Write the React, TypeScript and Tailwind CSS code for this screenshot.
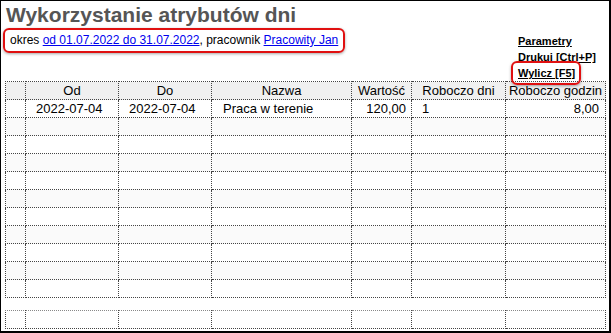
import React from "react";

const cols = [20, 93, 93, 140, 60, 94, 100];

function Cols() {
  return (
    <colgroup>
      {cols.map((w, i) => (
        <col key={i} style={{ width: w }} />
      ))}
    </colgroup>
  );
}

const cell = "border border-dotted border-[#444] h-[18px] p-0 leading-[15px]";

export default function App() {
  const empty = Array.from({ length: 10 }, (_, i) => i);
  return (
    <div className="w-[611px] h-[333px] bg-white border-l border-t border-r-2 border-b-2 border-black overflow-hidden font-['Liberation_Sans',Arial,sans-serif] text-black">
      <div className="pl-[5px] pt-[2px] text-[21px] leading-[23px] font-bold text-[#555]">
        Wykorzystanie atrybutów dni
      </div>
      <div className="flex items-start">
        <div className="flex-1 pt-[1px]">
          <div className="inline-block ml-[2px] border-2 border-[#e01010] rounded-[6px] px-[5px] pt-[3px] pb-[3px] text-[12px] leading-[15px] shadow-[0_1px_3px_rgba(0,0,0,0.35)]">
            okres <a href="#" className="text-[#0000ee] underline">od 01.07.2022 do 31.07.2022</a>, pracownik{" "}
            <a href="#" className="text-[#0000ee] underline">Pracowity Jan</a>
          </div>
        </div>
        <div className="w-[91px] mt-[7px] flex flex-col text-[11px] leading-[16px] font-bold">
          <a href="#" className="underline self-start">Parametry</a>
          <a href="#" className="underline self-start">Drukuj [Ctrl+P]</a>
          <span className="relative self-start">
            <a href="#" className="underline">Wylicz [F5]</a>
            <span className="absolute -left-[7px] -right-[6px] -top-[4px] -bottom-[4px] border-2 border-[#e01010] rounded-[6px] shadow-[0_1px_3px_rgba(0,0,0,0.35)] pointer-events-none" />
          </span>
        </div>
      </div>
      <div className="pl-[4px]">
        <table className="table-fixed border-collapse text-[13px] w-[601px]">
          <Cols />
          <thead>
            <tr className="bg-[#f0f0f0]">
              <th className={cell}></th>
              <th className={`${cell} font-normal text-center`}>Od</th>
              <th className={`${cell} font-normal text-center`}>Do</th>
              <th className={`${cell} font-normal text-center`}>Nazwa</th>
              <th className={`${cell} font-normal text-center`}>Wartość</th>
              <th className={`${cell} font-normal text-center`}>Roboczo dni</th>
              <th className={`${cell} font-normal text-center whitespace-nowrap`}>Roboczo godzin</th>
            </tr>
          </thead>
          <tbody>
            <tr>
              <td className={cell}></td>
              <td className={`${cell} pl-[10px]`}>2022-07-04</td>
              <td className={`${cell} pl-[10px]`}>2022-07-04</td>
              <td className={`${cell} pl-[11px]`}>Praca w terenie</td>
              <td className={`${cell} text-right pr-[5px]`}>120,00</td>
              <td className={`${cell} pl-[10px]`}>1</td>
              <td className={`${cell} text-right pr-[6px]`}>8,00</td>
            </tr>
            {empty.map((i) => (
              <tr key={i} className={i % 2 === 0 ? "bg-[#fafafa]" : "bg-white"}>
                {cols.map((_, j) => (
                  <td key={j} className={cell}></td>
                ))}
              </tr>
            ))}
          </tbody>
        </table>
        <table className="table-fixed border-collapse text-[13px] w-[601px] mt-[12px]">
          <Cols />
          <tbody>
            <tr>
              {cols.map((_, j) => (
                <td key={j} className={`${cell} border-t-[#888]`}></td>
              ))}
            </tr>
          </tbody>
        </table>
      </div>
    </div>
  );
}
